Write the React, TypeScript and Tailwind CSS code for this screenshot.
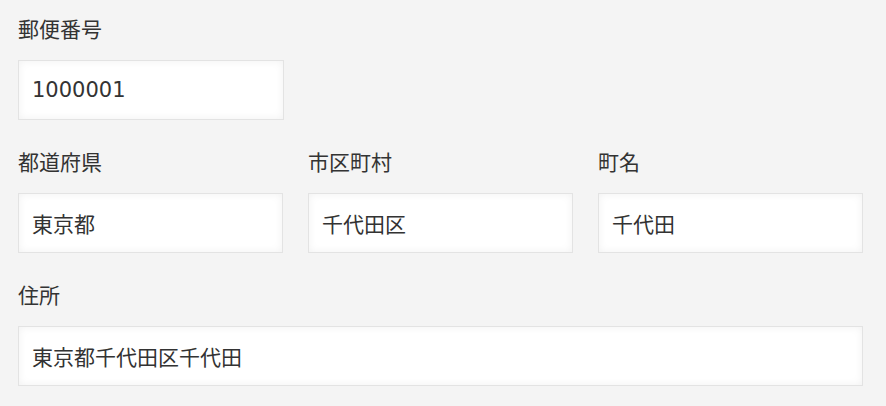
const font = { fontFamily: '"DejaVu Sans", "Noto Sans CJK JP", sans-serif' }

function Field({ label, value, className = '' }: { label: string; value: string; className?: string }) {
  return (
    <label className={`flex flex-col ${className}`}>
      <span className="text-[21px] leading-[28px] text-[#333] mb-[16px]">{label}</span>
      <input
        defaultValue={value}
        className="h-[60px] w-full border border-[#e3e3e3] bg-white px-[13px] text-[21px] text-[#333] outline-none shadow-[inset_0_0_8px_rgba(0,0,0,0.06)]"
      />
    </label>
  )
}

export default function App() {
  return (
    <div className="min-h-[406px] bg-[#f4f4f4] pl-[18px] pr-[23px] pt-[16px]" style={font}>
      <Field label="郵便番号" value="1000001" className="w-[266px]" />
      <div className="grid grid-cols-3 gap-x-[25px] mt-[29px]">
        <Field label="都道府県" value="東京都" />
        <Field label="市区町村" value="千代田区" />
        <Field label="町名" value="千代田" />
      </div>
      <Field label="住所" value="東京都千代田区千代田" className="mt-[29px]" />
    </div>
  )
}
